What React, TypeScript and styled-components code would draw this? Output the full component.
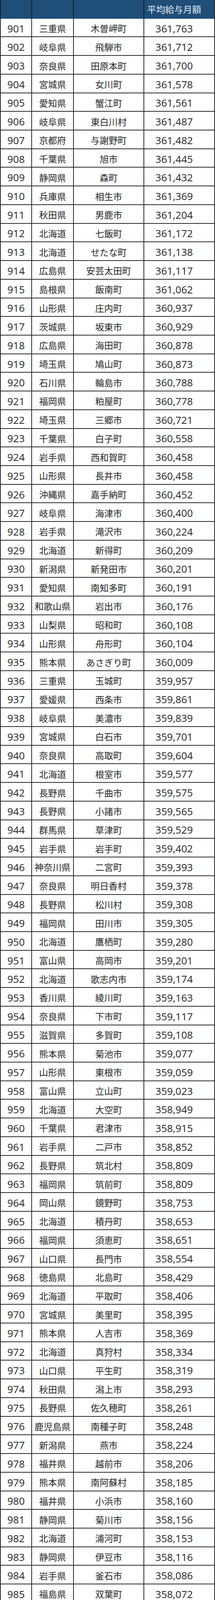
import styled, { createGlobalStyle } from "styled-components";

const rows = `901,三重県,木曽岬町,361763
902,岐阜県,飛騨市,361712
903,奈良県,田原本町,361700
904,宮城県,女川町,361578
905,愛知県,蟹江町,361561
906,岐阜県,東白川村,361487
907,京都府,与謝野町,361482
908,千葉県,旭市,361445
909,静岡県,森町,361432
910,兵庫県,相生市,361369
911,秋田県,男鹿市,361204
912,北海道,七飯町,361172
913,北海道,せたな町,361138
914,広島県,安芸太田町,361117
915,島根県,飯南町,361062
916,山形県,庄内町,360937
917,茨城県,坂東市,360929
918,広島県,海田町,360878
919,埼玉県,鳩山町,360873
920,石川県,輪島市,360788
921,福岡県,粕屋町,360778
922,埼玉県,三郷市,360721
923,千葉県,白子町,360558
924,岩手県,西和賀町,360458
925,山形県,長井市,360458
926,沖縄県,嘉手納町,360452
927,岐阜県,海津市,360400
928,岩手県,滝沢市,360224
929,北海道,新得町,360209
930,新潟県,新発田市,360201
931,愛知県,南知多町,360191
932,和歌山県,岩出市,360176
933,山梨県,昭和町,360108
934,山形県,舟形町,360104
935,熊本県,あさぎり町,360009
936,三重県,玉城町,359957
937,愛媛県,西条市,359861
938,岐阜県,美濃市,359839
939,宮城県,白石市,359701
940,奈良県,高取町,359604
941,北海道,根室市,359577
942,長野県,千曲市,359575
943,長野県,小諸市,359565
944,群馬県,草津町,359529
945,岩手県,岩手町,359402
946,神奈川県,二宮町,359393
947,奈良県,明日香村,359378
948,長野県,松川村,359308
949,福岡県,田川市,359305
950,北海道,鷹栖町,359280
951,富山県,高岡市,359201
952,北海道,歌志内市,359174
953,香川県,綾川町,359163
954,奈良県,下市町,359117
955,滋賀県,多賀町,359108
956,熊本県,菊池市,359077
957,山形県,東根市,359059
958,富山県,立山町,359023
959,北海道,大空町,358949
960,千葉県,君津市,358915
961,岩手県,二戸市,358852
962,長野県,筑北村,358809
963,福岡県,筑前町,358809
964,岡山県,鏡野町,358753
965,北海道,積丹町,358653
966,福岡県,須恵町,358651
967,山口県,長門市,358554
968,徳島県,北島町,358429
969,北海道,平取町,358406
970,宮城県,美里町,358395
971,熊本県,人吉市,358369
972,北海道,真狩村,358334
973,山口県,平生町,358319
974,秋田県,潟上市,358293
975,長野県,佐久穂町,358261
976,鹿児島県,南種子町,358248
977,新潟県,燕市,358224
978,福井県,越前市,358206
979,熊本県,南阿蘇村,358185
980,福井県,小浜市,358160
981,静岡県,菊川市,358156
982,北海道,浦河町,358153
983,静岡県,伊豆市,358116
984,岩手県,釜石市,358086
985,福島県,双葉町,358072
986,群馬県,富岡市,357901
987,福島県,西郷村,357895
988,鹿児島県,奄美市,357886
989,宮崎県,えびの市,357885
990,北海道,新冠町,357863
991,鳥取県,三朝町,357849
992,福島県,鮫川村,357830
993,北海道,名寄市,357785
994,長野県,宮田村,357753
995,群馬県,藤岡市,357743
996,山形県,高畠町,357632
997,佐賀県,多久市,357616
998,岐阜県,本巣市,357578
999,静岡県,御前崎市,357560
1000,宮城県,角田市,357543`
  .split("\n")
  .map((line) => line.split(","));

const GlobalStyle = createGlobalStyle`
  html, body {
    margin: 0;
    padding: 0;
    background: #ffffff;
  }
`;

const App = () => {
  return (
    <>
      <GlobalStyle />
      <Table>
        <HeadRow>
          <HeadCell />
          <HeadCell />
          <HeadCell />
          <HeadCell $money>平均給与月額</HeadCell>
        </HeadRow>
        {rows.map(([rank, pref, city, salary]) => (
          <Row key={rank}>
            <Cell $kind="num">{rank}</Cell>
            <Cell $kind="text">{pref}</Cell>
            <Cell $kind="text">{city}</Cell>
            <Cell $kind="money">{Number(salary).toLocaleString("en-US")}</Cell>
          </Row>
        ))}
      </Table>
    </>
  );
};

const Table = styled.div`
  width: 550px;
  box-sizing: border-box;
  border-right: 2px solid #2b2b2b;
`;

const Row = styled.div`
  display: grid;
  grid-template-columns: 80px 107px 180px 1fr;
  height: 47.73px;
  box-sizing: border-box;
  overflow: hidden;
  border-bottom: 2px solid #2b2b2b;
`;

const HeadRow = styled(Row)`
  background: #1f4e79;
  border-bottom-color: #1f4e79;
`;

const HeadCell = styled.div<{ $money?: boolean }>`
  display: flex;
  align-items: center;
  justify-content: center;
  line-height: 1;
  padding-top: 2px;
  padding-right: ${(p) => (p.$money ? "26px" : "0")};
  border-left: 2px solid #1a1a1a;
  color: #e9edf2;
  font-family: "Noto Sans CJK JP", sans-serif;
  font-size: 23px;
`;

const Cell = styled.div<{ $kind: "num" | "text" | "money" }>`
  display: flex;
  align-items: center;
  justify-content: center;
  line-height: 1;
  padding-top: 4px;
  padding-right: ${(p) => (p.$kind === "money" ? "26px" : "0")};
  border-left: 2px solid #2b2b2b;
  color: #262626;
  white-space: nowrap;
  font-family: ${(p) =>
    p.$kind === "text"
      ? '"Noto Sans CJK JP", sans-serif'
      : '"Open Sans", "Noto Sans CJK JP", sans-serif'};
  font-size: ${(p) => (p.$kind === "text" ? "23px" : "26px")};
`;

export default App;
